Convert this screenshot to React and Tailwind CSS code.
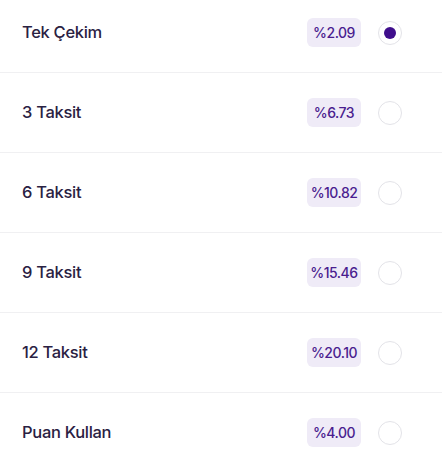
import React from 'react';

const options = [
  { label: 'Tek Çekim', rate: '%2.09' },
  { label: '3 Taksit', rate: '%6.73' },
  { label: '6 Taksit', rate: '%10.82' },
  { label: '9 Taksit', rate: '%15.46' },
  { label: '12 Taksit', rate: '%20.10' },
  { label: 'Puan Kullan', rate: '%4.00' },
];

const App = () => {
  const [selected, setSelected] = React.useState(0);

  return (
    <div className="min-h-screen bg-white overflow-hidden" style={{ fontFamily: 'Inter, "Noto Sans", sans-serif' }}>
      <div className="-mt-[7px]">
        {options.map((opt, i) => (
          <div
            key={opt.label}
            onClick={() => setSelected(i)}
            className="h-20 flex items-center border-b border-[#f0f0f2] pl-[22px] pr-10 cursor-pointer"
          >
            <span className="flex-1 -mt-px text-[16.5px] font-medium text-[#2a2142] tracking-[-0.3px]">
              {opt.label}
            </span>
            <span className="w-[54px] h-[29px] flex items-center justify-center rounded-md bg-[#efebf7] text-[14px] font-medium text-[#4a1d8f] tracking-[-0.5px]">
              {opt.rate}
            </span>
            <span className="ml-[17px] w-6 h-6 rounded-full border-[1.5px] border-[#e3e3e8] flex items-center justify-center">
              {selected === i && <span className="w-3 h-3 rounded-full bg-[#3f0e8c]" />}
            </span>
          </div>
        ))}
      </div>
    </div>
  );
};

export default App;
